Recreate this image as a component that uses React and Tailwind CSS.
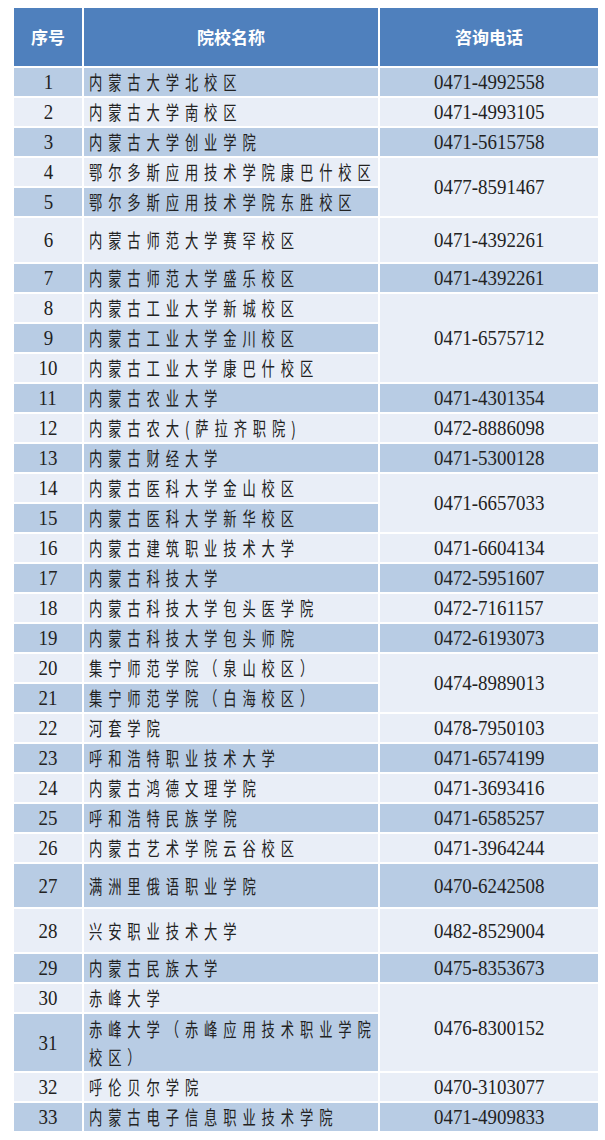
import React from "react";

const rows = [
  { no: 1, name: "内蒙古大学北校区", phone: "0471-4992558" },
  { no: 2, name: "内蒙古大学南校区", phone: "0471-4993105" },
  { no: 3, name: "内蒙古大学创业学院", phone: "0471-5615758" },
  { no: 4, name: "鄂尔多斯应用技术学院康巴什校区", phone: "0477-8591467", span: 2 },
  { no: 5, name: "鄂尔多斯应用技术学院东胜校区" },
  { no: 6, name: "内蒙古师范大学赛罕校区", phone: "0471-4392261", h: "h-[44px]" },
  { no: 7, name: "内蒙古师范大学盛乐校区", phone: "0471-4392261" },
  { no: 8, name: "内蒙古工业大学新城校区", phone: "0471-6575712", span: 3 },
  { no: 9, name: "内蒙古工业大学金川校区" },
  { no: 10, name: "内蒙古工业大学康巴什校区" },
  { no: 11, name: "内蒙古农业大学", phone: "0471-4301354" },
  { no: 12, name: "内蒙古农大(萨拉齐职院)", phone: "0472-8886098" },
  { no: 13, name: "内蒙古财经大学", phone: "0471-5300128" },
  { no: 14, name: "内蒙古医科大学金山校区", phone: "0471-6657033", span: 2 },
  { no: 15, name: "内蒙古医科大学新华校区" },
  { no: 16, name: "内蒙古建筑职业技术大学", phone: "0471-6604134" },
  { no: 17, name: "内蒙古科技大学", phone: "0472-5951607" },
  { no: 18, name: "内蒙古科技大学包头医学院", phone: "0472-7161157" },
  { no: 19, name: "内蒙古科技大学包头师院", phone: "0472-6193073" },
  { no: 20, name: "集宁师范学院（泉山校区）", phone: "0474-8989013", span: 2 },
  { no: 21, name: "集宁师范学院（白海校区）" },
  { no: 22, name: "河套学院", phone: "0478-7950103" },
  { no: 23, name: "呼和浩特职业技术大学", phone: "0471-6574199" },
  { no: 24, name: "内蒙古鸿德文理学院", phone: "0471-3693416" },
  { no: 25, name: "呼和浩特民族学院", phone: "0471-6585257" },
  { no: 26, name: "内蒙古艺术学院云谷校区", phone: "0471-3964244" },
  { no: 27, name: "满洲里俄语职业学院", phone: "0470-6242508", h: "h-[43px]" },
  { no: 28, name: "兴安职业技术大学", phone: "0482-8529004", h: "h-[43px]" },
  { no: 29, name: "内蒙古民族大学", phone: "0475-8353673" },
  { no: 30, name: "赤峰大学", phone: "0476-8300152", span: 2 },
  { no: 31, name: ["赤峰大学（赤峰应用技术职业学院", "校区）"], h: "h-[57px]" },
  { no: 32, name: "呼伦贝尔学院", phone: "0470-3103077" },
  { no: 33, name: "内蒙古电子信息职业技术学院", phone: "0471-4909833" }
];

const spanClass = { 2: "row-span-2", 3: "row-span-3" };

// narrow serif digits
const Num = ({ children }) => (
  <span className="inline-block scale-x-[0.86] whitespace-nowrap font-['Liberation_Serif',serif] text-[22px] leading-none text-[#222]">
    {children}
  </span>
);

const Zh = ({ children }) => (
  <span className="inline-block origin-left scale-x-[0.7] whitespace-nowrap font-['Noto_Sans_CJK_SC',sans-serif] text-[19px] leading-[28px] tracking-[8.4px] text-[#222]">
    {children}
  </span>
);

const App = () => {
  return (
    <div className="min-h-[1140px] w-[605px] bg-white pt-[8px] pl-[14px]">
      <div className="grid w-[584px] grid-cols-[68px_294px_218px] gap-[2px]">
        {/* header */}
        <div className="col-start-1 flex h-[58px] items-center justify-center bg-[#4f80bd] font-['Noto_Sans_CJK_SC',sans-serif] text-[17px] font-bold text-white">
          序号
        </div>
        <div className="col-start-2 flex items-center justify-center bg-[#4f80bd] font-['Noto_Sans_CJK_SC',sans-serif] text-[17px] font-bold text-white">
          院校名称
        </div>
        <div className="col-start-3 flex items-center justify-center bg-[#4f80bd] font-['Noto_Sans_CJK_SC',sans-serif] text-[17px] font-bold text-white">
          咨询电话
        </div>

        {rows.map((row) => {
          const bg = row.no % 2 === 1 ? "bg-[#b8cce4]" : "bg-[#e9eef7]";
          return (
            <React.Fragment key={row.no}>
              <div
                className={`col-start-1 flex items-center justify-center ${bg} ${
                  row.h || "h-[28px]"
                }`}
              >
                <Num>{row.no}</Num>
              </div>
              <div className={`col-start-2 flex flex-col justify-center pl-[5px] ${bg}`}>
                {Array.isArray(row.name) ? (
                  row.name.map((line) => <Zh key={line}>{line}</Zh>)
                ) : (
                  <Zh>{row.name}</Zh>
                )}
              </div>
              {row.phone && (
                <div
                  className={`col-start-3 flex items-center justify-center ${bg} ${
                    spanClass[row.span] || ""
                  }`}
                >
                  <Num>{row.phone}</Num>
                </div>
              )}
            </React.Fragment>
          );
        })}
      </div>
    </div>
  );
};

export default App;
